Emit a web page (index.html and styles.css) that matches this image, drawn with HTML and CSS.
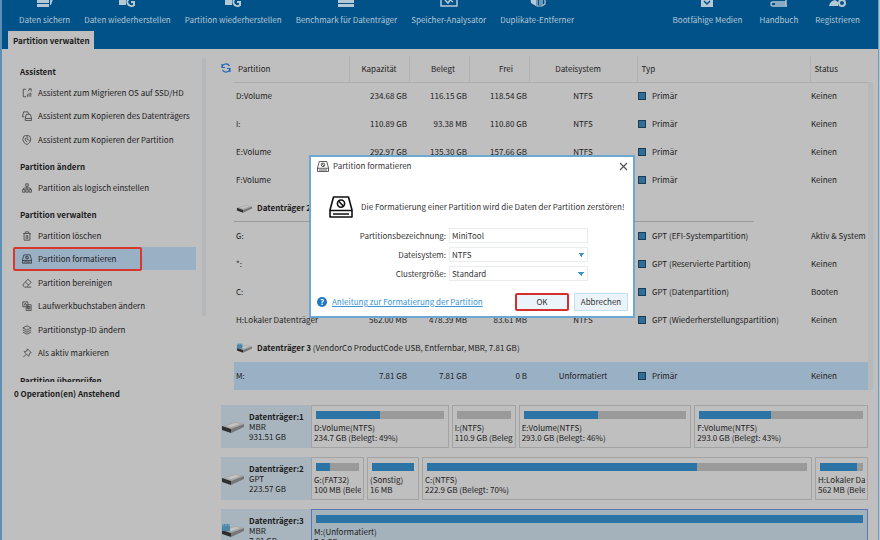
FILE: index.html
```html
<!DOCTYPE html>
<html lang="de">
<head>
    <meta charset="UTF-8">
    <meta name="viewport" content="width=device-width, initial-scale=1.0">
    <title>Partition formatieren</title>
    <link rel="stylesheet" href="styles.css">
</head>
<body>
<svg class="symbols" width="0" height="0" aria-hidden="true">
    <symbol id="drive" viewBox="0 0 24 16">
        <path d="M1 7 L14 3 L23 5 L10 10 Z" fill="#a8a8a8"/>
        <path d="M1 7 L10 10 L10 14 L1 11 Z" fill="#2e2e2e"/>
        <path d="M10 10 L23 5 L23 8 L10 14 Z" fill="#777"/>
        <path d="M5 7 L14 4 L19 5 L10 8 Z" fill="#c4c4c4"/>
    </symbol>
    <symbol id="usb-drive" viewBox="0 0 24 16">
        <use href="#drive"/>
        <path d="M1 1 H9 V8 H1 Z" fill="#4c86a8"/>
        <path d="M2 0 V3 M5 0 V3 M8 0 V3" stroke="#8fb4c8" stroke-width="1"/>
    </symbol>
    <symbol id="format" viewBox="0 0 24 22">
        <g fill="none" stroke="currentColor" stroke-width="1.6" stroke-linejoin="round">
            <path d="M4.5 1 H19.5 L23 14 V21 H1 V14 Z M1 14.5 H23 M4 18 H20"/>
            <circle cx="12" cy="7.6" r="3.6"/>
            <path d="M9.5 5 L14.5 10.2"/>
        </g>
    </symbol>
</svg>
<div class="window">
    <header class="ribbon">
        <nav class="toolbar">
            <button type="button">
                <svg width="18" height="16" viewBox="0 0 18 16"><path d="M1 0h12v12H1z M1 13h12v3H1z M14 8h3l-2 6h-1z" fill="currentColor"/><path d="M1 12.5h13" stroke="#005288"/></svg>
                Daten sichern
            </button>
            <button type="button">
                <svg width="18" height="16" viewBox="0 0 18 16"><path d="M1 3h7v11H1z" fill="currentColor"/><path d="M16 8 a4 4 0 1 0 0 6 M16 15v-4h-3" fill="none" stroke="currentColor" stroke-width="2"/></svg>
                Daten wiederherstellen
            </button>
            <button type="button">
                <svg width="18" height="16" viewBox="0 0 18 16"><path d="M1 3h7v11H1z" fill="currentColor"/><path d="M16 8 a4 4 0 1 0 0 6 M16 15v-4h-3" fill="none" stroke="currentColor" stroke-width="2"/></svg>
                Partition wiederherstellen
            </button>
            <button type="button">
                <svg width="18" height="16" viewBox="0 0 18 16"><path d="M1 1h16v5H1z M1 8h16v4H1z M1 13h16v3H1z" fill="currentColor"/></svg>
                Benchmark für Datenträger
            </button>
            <button type="button">
                <svg width="18" height="16" viewBox="0 0 18 16"><path d="M1 2h16v13H1z M5 9l3 3 2-3 3 2" fill="none" stroke="currentColor" stroke-width="1.5"/></svg>
                Speicher-Analysator
            </button>
            <button type="button">
                <svg width="18" height="16" viewBox="0 0 18 16"><path d="M2 4h6v11l-5-3z" fill="currentColor"/><path d="M9 7h5l3 2v4l-3 2h-5z M12 9v5 M14 9v5" fill="none" stroke="currentColor" stroke-width="1.2"/></svg>
                Duplikate-Entferner
            </button>
            <button type="button" class="push">
                <svg width="18" height="16" viewBox="0 0 18 16"><path d="M3 3h12v13H3z" fill="currentColor"/><path d="M6 10l3 3 3-3" fill="none" stroke="#005288" stroke-width="1.5"/></svg>
                Bootfähige Medien
            </button>
            <button type="button">
                <svg width="18" height="16" viewBox="0 0 18 16"><path d="M4 1h12v13q0 1 1 1H3q-2 0-2-2t2-2h13 M5 13h11" fill="none" stroke="currentColor" stroke-width="1.4"/></svg>
                Handbuch
            </button>
            <button type="button">
                <svg width="18" height="16" viewBox="0 0 18 16"><path d="M0 15q1-5 6-6l3 2v4z" fill="currentColor"/><circle cx="13" cy="12" r="3" fill="none" stroke="currentColor" stroke-width="2"/></svg>
                Registrieren
            </button>
        </nav>
        <div class="tabs">
            <a href="#" class="tab">Partition verwalten</a>
        </div>
    </header>

    <div class="workspace">
        <aside class="sidebar">
            <div class="actions">
                <h2>Assistent</h2>
                <ul>
                    <li><a href="#"><svg class="icon" viewBox="0 0 12 12"><path d="M5 1.500H1.500V10.500H5 M7 4l3-3 M8 1h3v3 M6.500 10.500V7.500 M8.500 10.500V6 M10.500 10.500V5.500"/></svg>Assistent zum Migrieren OS auf SSD/HD</a></li>
                    <li><a href="#"><svg class="icon" viewBox="0 0 12 12"><path d="M3 7H.5L2 1h5l1 2.500 M4 9l1-5h5l1.500 5v2.500H4z M4 9h7.500"/></svg>Assistent zum Kopieren des Datenträgers</a></li>
                    <li><a href="#"><svg class="icon" viewBox="0 0 12 12"><path d="M6 11.500C3 10 1 8 1 5a4.500 4.500 0 0 1 9.500 0c0 3-2 5-4.500 6.500z M6 5V1 M6 5l3.500 2 M4 3.500v3l2 2"/></svg>Assistent zum Kopieren der Partition</a></li>
                </ul>
                <h2>Partition ändern</h2>
                <ul>
                    <li><a href="#"><svg class="icon" viewBox="0 0 12 12"><path d="M4.500 1h3v3h-3z M6 4v3 M2 8V6h8v2 M.5 8h3v3h-3z M4.500 8h3v3h-3z M8.500 8h3v3h-3z"/></svg>Partition als logisch einstellen</a></li>
                </ul>
                <h2>Partition verwalten</h2>
                <ul>
                    <li><a href="#"><svg class="icon" viewBox="0 0 12 12"><path d="M1.500 3h9 M4 3V1h4v2 M2.500 3v8h7V3 M5 5.500v3.500h2V5.500z"/></svg>Partition löschen</a></li>
                    <li class="selected"><a href="#"><svg class="icon"><use href="#format"/></svg>Partition formatieren</a></li>
                    <li><a href="#"><svg class="icon" viewBox="0 0 12 12"><path d="M1.500 7.500L7 1.500l4 3.500-5.500 6H3L1.500 9.500z M4 5l4 3.500 M6 11h5"/></svg>Partition bereinigen</a></li>
                    <li><a href="#"><svg class="icon" viewBox="0 0 12 12"><path d="M1 1h6v6H1z M5 4.500h6v7H5z M2.500 5.500L4 2.500l1 2 M6.500 6.500h3v3h-3z M8 6v4"/></svg>Laufwerkbuchstaben ändern</a></li>
                    <li><a href="#"><svg class="icon" viewBox="0 0 12 12"><path d="M6 1l5 2.500L6 6 1 3.500z M1 6l5 2.500L11 6 M1 8.500L6 11l5-2.500"/></svg>Partitionstyp-ID ändern</a></li>
                    <li><a href="#"><svg class="icon" viewBox="0 0 12 12"><path d="M6.500 1l4.500 4.500-1.500.5-1.500 4L2.500 4.500l3.500-1z M5 7.500L1.500 11"/></svg>Als aktiv markieren</a></li>
                </ul>
                <h2>Partition überprüfen</h2>
            </div>
            <p class="pending">0 Operation(en) Anstehend</p>
        </aside>

        <main class="content">
            <div class="list">
                <button type="button" class="refresh" aria-label="Aktualisieren">
                    <svg width="10" height="10" viewBox="0 0 10 10"><path d="M1 4.500a4 4 0 0 1 7.500-1.500 M9 5.500a4 4 0 0 1-7.500 1.500 M1 1v3.500h3 M9 9V5.500H6" fill="none" stroke="#2468b8" stroke-width="1.200"/></svg>
                </button>
                <table>
                    <colgroup>
                        <col>
                        <col class="c-size">
                        <col class="c-size">
                        <col class="c-size">
                        <col class="c-fs">
                        <col class="c-type">
                        <col class="c-status">
                    </colgroup>
                    <thead>
                        <tr><th>Partition</th><th>Kapazität</th><th>Belegt</th><th>Frei</th><th>Dateisystem</th><th>Typ</th><th>Status</th></tr>
                    </thead>
                    <tbody>
                        <tr><td>D:Volume</td><td>234.68 GB</td><td>116.15 GB</td><td>118.54 GB</td><td>NTFS</td><td><i class="box"></i>Primär</td><td>Keinen</td></tr>
                        <tr><td>I:</td><td>110.89 GB</td><td>93.38 MB</td><td>110.80 GB</td><td>NTFS</td><td><i class="box"></i>Primär</td><td>Keinen</td></tr>
                        <tr><td>E:Volume</td><td>292.97 GB</td><td>135.30 GB</td><td>157.66 GB</td><td>NTFS</td><td><i class="box"></i>Primär</td><td>Keinen</td></tr>
                        <tr><td>F:Volume</td><td></td><td></td><td></td><td></td><td><i class="box"></i>Primär</td><td>Keinen</td></tr>
                        <tr class="group ruled"><td colspan="7"><svg width="17" height="11"><use href="#drive"/></svg><b>Datenträger 2</b></td></tr>
                        <tr><td>G:</td><td></td><td></td><td></td><td></td><td><i class="box"></i>GPT (EFI-Systempartition)</td><td>Aktiv &amp; System</td></tr>
                        <tr><td>*:</td><td></td><td></td><td></td><td></td><td><i class="box"></i>GPT (Reservierte Partition)</td><td>Keinen</td></tr>
                        <tr><td>C:</td><td></td><td></td><td></td><td></td><td><i class="box"></i>GPT (Datenpartition)</td><td>Booten</td></tr>
                        <tr><td>H:Lokaler Datenträger</td><td>562.00 MB</td><td>478.39 MB</td><td>83.61 MB</td><td>NTFS</td><td><i class="box"></i>GPT (Wiederherstellungspartition)</td><td>Keinen</td></tr>
                        <tr class="group"><td colspan="7"><svg width="17" height="11"><use href="#usb-drive"/></svg><b>Datenträger 3</b> (VendorCo ProductCode USB, Entfernbar, MBR, 7.81 GB)</td></tr>
                        <tr class="current"><td>M:</td><td>7.81 GB</td><td>7.81 GB</td><td>0 B</td><td>Unformatiert</td><td><i class="box"></i>Primär</td><td>Keinen</td></tr>
                    </tbody>
                </table>
                <div class="scrollbar"></div>
            </div>

            <div class="disks">
                <section class="disk">
                    <div class="disk-name">
                        <svg width="24" height="16"><use href="#drive"/></svg>
                        <div><b>Datenträger:1</b><br>MBR<br>931.51 GB</div>
                    </div>
                    <div class="parts">
                        <div class="part" style="flex-grow: 132"><div class="bar"><span style="width: 50%"></span></div><p>D:Volume(NTFS)<br>234.7 GB (Belegt: 49%)</p></div>
                        <div class="part" style="flex-grow: 58"><div class="bar"><span style="width: 0%"></span></div><p>I:(NTFS)<br>110.9 GB (Belegt: 0%)</p></div>
                        <div class="part" style="flex-grow: 167"><div class="bar"><span style="width: 46%"></span></div><p>E:Volume(NTFS)<br>293.0 GB (Belegt: 46%)</p></div>
                        <div class="part" style="flex-grow: 168"><div class="bar"><span style="width: 44%"></span></div><p>F:Volume(NTFS)<br>293.0 GB (Belegt: 43%)</p></div>
                    </div>
                </section>
                <section class="disk">
                    <div class="disk-name">
                        <svg width="24" height="16"><use href="#drive"/></svg>
                        <div><b>Datenträger:2</b><br>GPT<br>223.57 GB</div>
                    </div>
                    <div class="parts">
                        <div class="part" style="flex-grow: 47"><div class="bar"><span style="width: 32%"></span></div><p>G:(FAT32)<br>100 MB (Belegt: 31%)</p></div>
                        <div class="part" style="flex-grow: 46"><div class="bar"><span style="width: 100%"></span></div><p>(Sonstig)<br>16 MB</p></div>
                        <div class="part" style="flex-grow: 384"><div class="bar"><span style="width: 71%"></span></div><p>C:(NTFS)<br>222.9 GB (Belegt: 70%)</p></div>
                        <div class="part" style="flex-grow: 47"><div class="bar"><span style="width: 86%"></span></div><p>H:Lokaler Datenträger<br>562 MB (Belegt: 85%)</p></div>
                    </div>
                </section>
                <section class="disk">
                    <div class="disk-name">
                        <svg width="24" height="16"><use href="#usb-drive"/></svg>
                        <div><b>Datenträger:3</b><br>MBR<br>7.81 GB</div>
                    </div>
                    <div class="parts">
                        <div class="part active" style="flex-grow: 1"><div class="bar"><span style="width: 100%"></span></div><p>M:(Unformatiert)<br>7.8 GB</p></div>
                    </div>
                </section>
            </div>
        </main>
    </div>

    <form class="dialog" role="dialog" aria-labelledby="dialogTitle">
        <div class="dialog-title">
            <svg width="12" height="11"><use href="#format"/></svg>
            <span id="dialogTitle">Partition formatieren</span>
            <button type="button" class="close" aria-label="Schließen"><svg width="9" height="9" viewBox="0 0 9 9"><path d="M1 1l7 7M8 1l-7 7" stroke="#555" stroke-width="1.200"/></svg></button>
        </div>
        <div class="warning">
            <svg width="24" height="22"><use href="#format"/></svg>
            <span>Die Formatierung einer Partition wird die Daten der Partition zerstören!</span>
        </div>
        <div class="fields">
            <label for="label">Partitionsbezeichnung:</label>
            <input type="text" id="label" value="MiniTool">
            <label for="fs">Dateisystem:</label>
            <select id="fs"><option>NTFS</option><option>FAT32</option></select>
            <label for="cluster">Clustergröße:</label>
            <select id="cluster"><option>Standard</option></select>
        </div>
        <div class="dialog-footer">
            <span class="help">?</span>
            <a href="#">Anleitung zur Formatierung der Partition</a>
            <button type="submit" class="ok">OK</button>
            <button type="button" class="cancel">Abbrechen</button>
        </div>
    </form>
</div>
</body>
</html>
```
FILE: styles.css
```css
* {
    box-sizing: border-box;
}
body {
    margin: 0;
    height: 100vh;
    overflow: hidden;
    background: #b9c4cb;
    font-family: "Noto Sans CJK SC", "Open Sans", sans-serif;
    font-size: 8px;
    line-height: 12px;
    color: #1c1c1c;
}
button, input, select {
    font: inherit;
    color: inherit;
}
ul, h2, p {
    margin: 0;
    padding: 0;
    list-style: none;
}
a {
    color: inherit;
    text-decoration: none;
}
.symbols {
    position: absolute;
}
.window {
    height: 100vh;
    display: flex;
    flex-direction: column;
    margin-right: 1px;
    border-left: 2px solid #5b8fb5;
    border-right: 1px solid #6e9fc2;
    background: #bfbfbf;
    overflow: hidden;
}

/* top bar */
.ribbon {
    background: #005288;
    flex: none;
}
.toolbar {
    display: flex;
    align-items: flex-end;
    gap: 14px;
    height: 31px;
    padding: 0 18px 4px 17px;
    overflow: hidden;
}
.toolbar button {
    display: flex;
    flex-direction: column;
    align-items: center;
    gap: 6px;
    padding: 0;
    border: none;
    background: none;
    color: #b5c8d6;
    line-height: 14px;
    white-space: nowrap;
}
.toolbar .push {
    margin-left: auto;
}
.toolbar .push ~ button {
    margin-left: 3px;
}
.tabs {
    padding-left: 6px;
    display: flex;
}
.tab {
    padding: 1px 4px 0 5px;
    line-height: 17px;
    font-weight: bold;
    background: #bfbfbf;
}

/* left column */
.workspace {
    display: flex;
    flex: 1;
}
.sidebar {
    flex: none;
    width: 204px;
    padding-top: 9px;
}
.actions {
    height: 324px;
    overflow: hidden;
    background: linear-gradient(#b4b8bb, #b4b8bb) right top / 4px 258px no-repeat;
}
.actions h2 {
    padding: 6px 18px 0;
    font-size: 8px;
    line-height: 15px;
}
.actions ul {
    padding: 2px 10px 2px 12px;
}
.actions li {
    position: relative;
    height: 23px;
}
.actions li:nth-child(even) {
    height: 24px;
}
.actions li a {
    display: flex;
    align-items: center;
    height: 23px;
    gap: 6px;
    padding-left: 8px;
    white-space: nowrap;
}
.actions .selected a {
    background: #9ab0c4;
}
.actions .selected::after {
    content: "";
    position: absolute;
    left: -1px;
    top: 0;
    width: 125px;
    height: 20px;
    border: 2px solid #d8372c;
    border-radius: 2px;
}
.icon {
    width: 10px;
    height: 10px;
    fill: none;
    stroke: #444;
    stroke-width: 1;
}
.pending {
    padding: 5px 12px;
    line-height: 14px;
    font-weight: bold;
}

/* partition list */
.content {
    flex: 1;
    min-width: 0;
    padding: 7px 5px 0 14px;
}
.list {
    display: flex;
    align-items: flex-start;
}
.refresh {
    width: 14px;
    height: 26px;
    padding: 0 0 0 1px;
    border: none;
    background: none;
    text-align: left;
}
table {
    flex: 1;
    table-layout: fixed;
    width: 100%;
    border-collapse: collapse;
    white-space: nowrap;
}
.c-size {
    width: 60px;
}
.c-fs {
    width: 108px;
}
.c-type {
    width: 173px;
}
.c-status {
    width: 58px;
}
th, td {
    padding: 0 2px;
    text-align: right;
    font-weight: normal;
}
th {
    height: 26px;
    text-align: center;
    border-bottom: 1px solid #adadad;
    border-left: 1px solid #b2b2b2;
}
td {
    height: 28px;
}
th:first-child {
    border-left: none;
}
th:nth-child(3) {
    padding-left: 10px;
}
th:nth-child(4) {
    padding-left: 16px;
}
th:nth-child(5) {
    padding-right: 12px;
}
th:first-child, th:nth-child(n+6) {
    text-align: left;
    padding-left: 4px;
}
td:first-child, td:nth-child(n+6) {
    text-align: left;
}
td:nth-child(5) {
    text-align: center;
}
td:nth-child(n+6) {
    padding-left: 1px;
}
.box {
    display: inline-block;
    width: 8px;
    height: 8px;
    margin-right: 6px;
    border: 1px solid #1d3d52;
    background: #2e6e98;
    vertical-align: -1px;
}
.group svg {
    margin-right: 4px;
    vertical-align: middle;
}
.ruled td {
    background: linear-gradient(#999, #999) left bottom / 82% 1px no-repeat;
}
.current td {
    background: #9ab0c4;
}
.scrollbar {
    width: 5px;
    height: 308px;
    margin-top: 26px;
    background: #b5b9bc;
}

/* disk map */
.disks {
    display: flex;
    flex-direction: column;
    gap: 9px;
    padding: 15px 5px 0 1px;
}
.disk {
    display: flex;
    height: 43px;
    line-height: 10px;
}
.disk-name {
    flex: none;
    width: 90px;
    display: flex;
    align-items: center;
    gap: 4px;
    background: #a8b5bf;
    white-space: nowrap;
}
.parts {
    flex: 1;
    display: flex;
    gap: 3px;
    min-width: 0;
}
.part {
    flex-basis: 0;
    min-width: 0;
    padding: 5px 2px;
    border: 1px solid #a3a3a3;
    white-space: nowrap;
}
.part p {
    overflow: hidden;
}
.part.active {
    background: #a4b2bc;
    border-color: #5b76b5;
}
.bar {
    height: 8px;
    margin: 0 2px 4px;
    background: #9a9a9a;
}
.bar span {
    display: block;
    height: 8px;
    background: #2c74a5;
}

/* format dialog */
.dialog {
    position: absolute;
    left: 309px;
    top: 155px;
    width: 326px;
    border: 2px solid #6ca9d2;
    padding: 3px 5px 5px 6px;
    background: #fff;
    color: #333;
}
.dialog-title {
    display: flex;
    align-items: center;
    gap: 4px;
    height: 12px;
}
.close {
    margin-left: auto;
    padding: 0;
    border: none;
    background: none;
    line-height: 0;
}
.warning {
    display: flex;
    align-items: center;
    gap: 8px;
    padding: 24px 0 10px 12px;
    white-space: nowrap;
}
.warning svg {
    color: #111;
}
.fields {
    display: grid;
    grid-template-columns: 129px 139px;
    grid-auto-rows: 15px;
    gap: 4px 3px;
    align-items: center;
    text-align: right;
}
.fields input, .fields select {
    width: 100%;
    height: 15px;
    padding: 0 2px;
    border: 1px solid #e9edef;
    background: #fff;
}
.fields select {
    appearance: none;
    background: linear-gradient(to bottom right, #3d93cd 50%, transparent 50%) right 2px center / 4px 4px no-repeat, linear-gradient(to bottom left, #3d93cd 50%, transparent 50%) right 5px center / 4px 4px no-repeat, #fff;
}
.dialog-footer {
    display: flex;
    align-items: center;
    gap: 5px;
    padding-top: 12px;
    white-space: nowrap;
}
.dialog-footer a {
    color: #3a94d4;
    text-decoration: underline;
}
.help {
    width: 10px;
    border-radius: 5px;
    background: #1f78c4;
    color: #fff;
    font-weight: bold;
    line-height: 10px;
    text-align: center;
}
.dialog-footer button {
    width: 54px;
    height: 18px;
    padding: 0;
    border: 1px solid #c3dff0;
    background: #eaf4fa;
}
.dialog-footer .ok {
    margin-left: auto;
    border: 2px solid #d32f2f;
    border-radius: 2px;
}
```
